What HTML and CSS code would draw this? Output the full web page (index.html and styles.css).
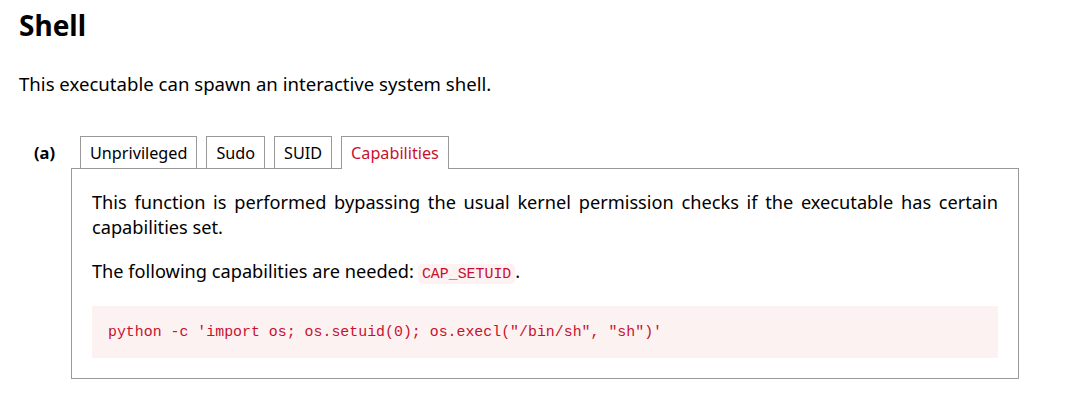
FILE: index.html
```html
<!DOCTYPE html>
<html lang="en">
<head>
  <meta charset="UTF-8">
  <title>Shell</title>
  <link rel="stylesheet" href="styles.css">
</head>
<body>
  <h1>Shell</h1>
  <p class="lead">This executable can spawn an interactive system shell.</p>

  <!-- esempio (a) con le schede -->
  <div class="example">
    <div class="label">(a)</div>
    <div class="tabs-wrap">
      <ul class="tabs">
        <li class="tab">Unprivileged</li>
        <li class="tab">Sudo</li>
        <li class="tab">SUID</li>
        <li class="tab active">Capabilities</li>
      </ul>
      <div class="panel">
        <p>This function is performed bypassing the usual kernel permission checks if the executable has certain capabilities set.</p>
        <p>The following capabilities are needed:<code>CAP_SETUID</code>.</p>
        <pre>python -c 'import os; os.setuid(0); os.execl("/bin/sh", "sh")'</pre>
      </div>
    </div>
  </div>
</body>
</html>
```

FILE: styles.css
```css
/* Stili globali */
* { margin: 0; padding: 0; box-sizing: border-box; }
body {
  font-family: "Noto Sans", "Open Sans", sans-serif;
  font-size: 18.2px;
  color: #000;
  background: #fff;
  padding: 0 19px;
}
h1 {
  font-size: 28px;
  font-weight: bold;
  line-height: 40px;
  margin-top: 5px;
}
.lead {
  font-size: 18.6px;
  line-height: 25px;
  margin-top: 26px;
}

/* Esempio con schede */
.example {
  display: flex;
  margin-top: 40px;
}
.label {
  width: 52px;
  padding-left: 15px;
  font-weight: bold;
  font-size: 16.5px;
  line-height: 32px;
  padding-top: 1px;
}
.tabs-wrap {
  width: 948px;
}
.tabs {
  list-style: none;
  display: flex;
  gap: 8px;
  padding-left: 9px;
}
.tab {
  border: 1px solid #999;
  border-bottom: none;
  padding: 0 9px;
  height: 32px;
  line-height: 32px;
  font-size: 16.2px;
  background: #fff;
  position: relative;
  margin-right: 1px;
}
.tab.active {
  color: #c8102e;
  height: 33px;
  margin-bottom: -1px;
  z-index: 1;
}
.panel {
  border: 1px solid #999;
  padding: 21px 20px 20px;
}
.panel p {
  line-height: 25px;
  text-align: justify;
  margin-bottom: 19px;
}
code, pre {
  font-family: "Liberation Mono", "DejaVu Sans Mono", monospace;
  color: #c8102e;
  background: #fdf2f2;
}
code {
  font-size: 14.9px;
  padding: 2px 4px;
  margin-left: 4px;
  border-radius: 4px;
}
pre {
  font-size: 14.9px;
  line-height: 20px;
  padding: 16px 16px;
}
```
